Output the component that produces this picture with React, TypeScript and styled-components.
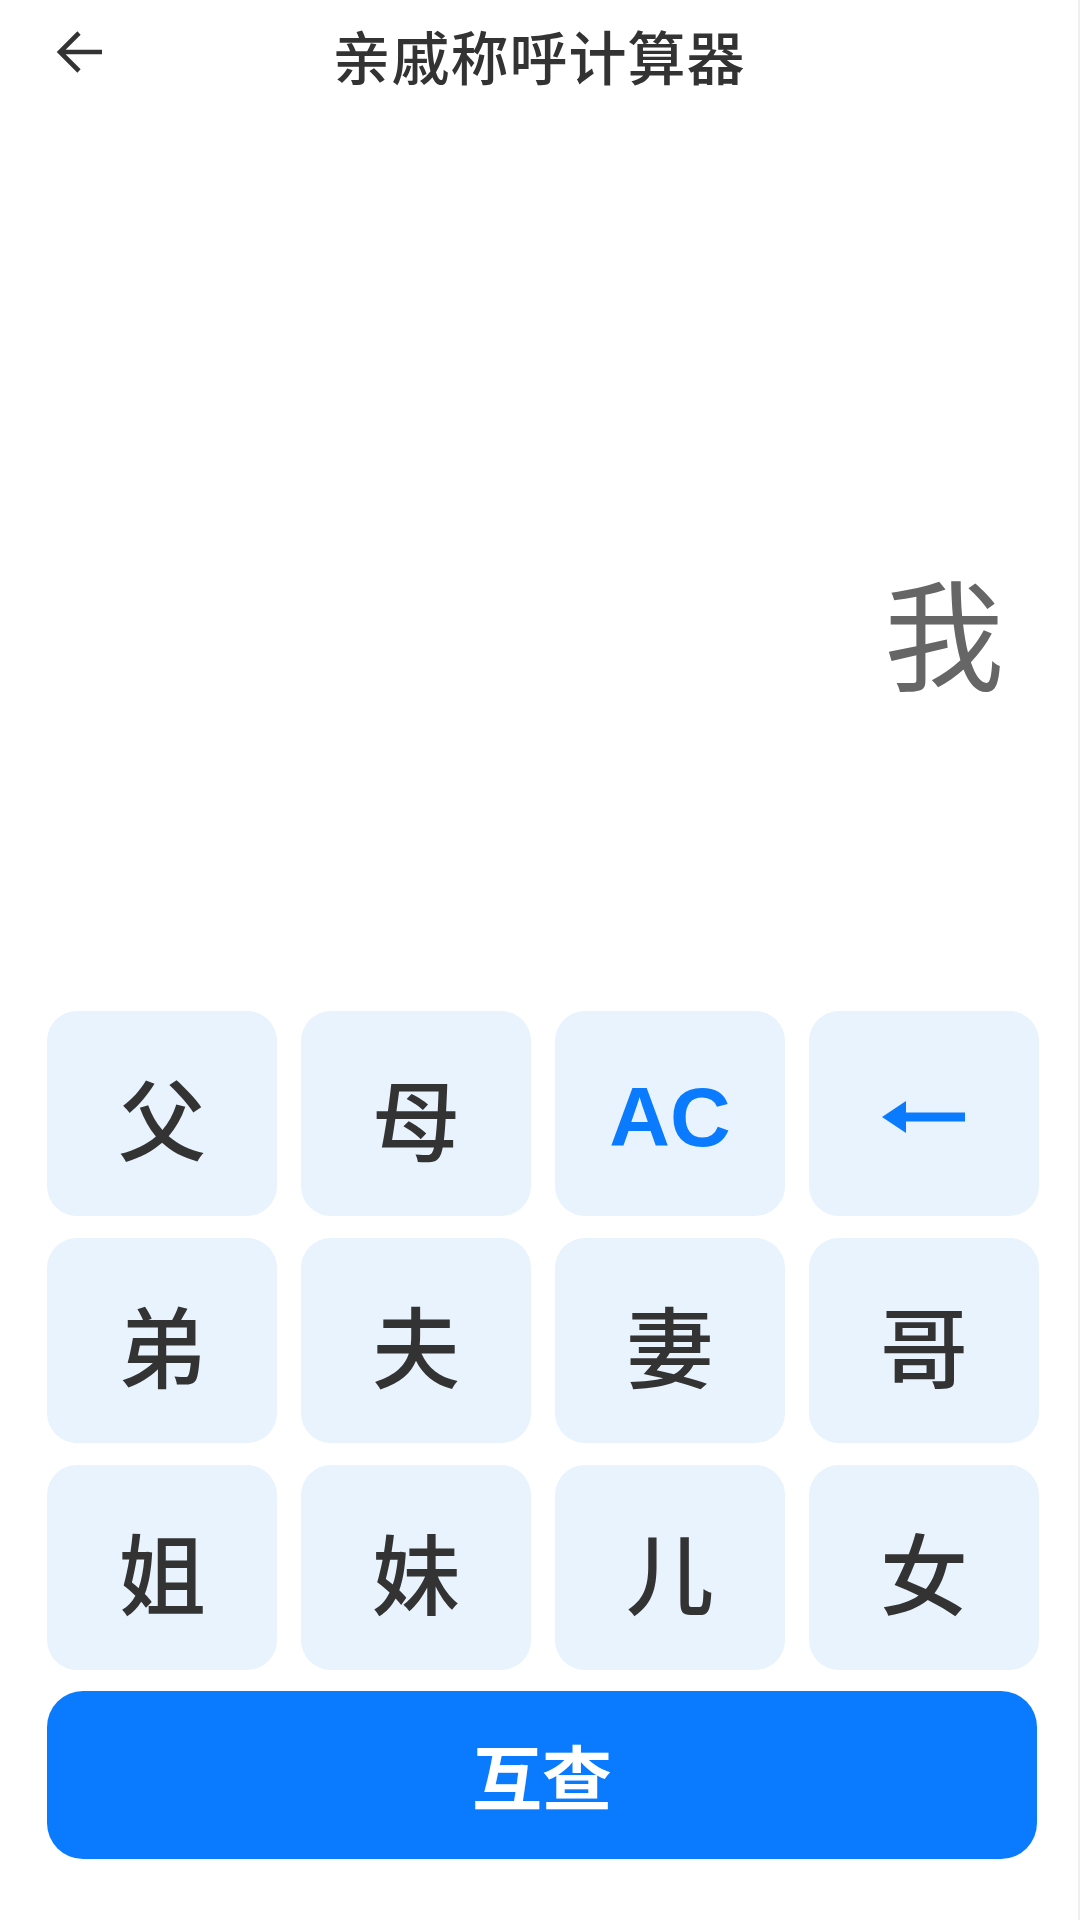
import React from 'react';
import styled, { createGlobalStyle } from 'styled-components';

const GlobalStyle = createGlobalStyle`
    html, body {
        margin: 0;
        padding: 0;
        background: #ffffff;
    }
    body {
        font-family: "Noto Sans CJK SC", "Noto Sans", sans-serif;
    }
`;

const KEYS: { label: string; kind?: 'clear' | 'back' }[] = [
    { label: '父' },
    { label: '母' },
    { label: 'AC', kind: 'clear' },
    { label: '←', kind: 'back' },
    { label: '弟' },
    { label: '夫' },
    { label: '妻' },
    { label: '哥' },
    { label: '姐' },
    { label: '妹' },
    { label: '儿' },
    { label: '女' },
];

export default (() => {
    return (
        <>
            <GlobalStyle />
            <Page>
                <Header>
                    <BackButton aria-label="返回">
                        <svg width="48" height="44" viewBox="0 0 48 44" fill="none">
                            <path d="M46 22H4M23 3L4 22l19 19" stroke="#333" strokeWidth="4.6" strokeLinejoin="miter" />
                        </svg>
                    </BackButton>
                    <Title>亲戚称呼计算器</Title>
                </Header>
                <Display>
                    <Result>我</Result>
                </Display>
                <Keypad>
                    {KEYS.map((key) => (
                        <Key key={key.label} $accent={!!key.kind}>
                            {key.kind === 'back' ? (
                                <svg width="84" height="32" viewBox="0 0 84 32">
                                    <path d="M0 16L24 0v11.5h59v9H24V32z" fill="#0A7BFF" />
                                </svg>
                            ) : key.kind === 'clear' ? (
                                <ClearLabel>{key.label}</ClearLabel>
                            ) : (
                                key.label
                            )}
                        </Key>
                    ))}
                </Keypad>
                <Footer>
                    <SubmitButton>互查</SubmitButton>
                </Footer>
            </Page>
        </>
    );
}) as React.FC;

const Page = styled.div`
    width: 1080px;
    min-height: 1920px;
    box-sizing: border-box;
    border-right: 2px solid #efefef;
    display: flex;
    flex-direction: column;
    background: #ffffff;
`;

const Header = styled.header`
    position: relative;
    height: 110px;
    display: flex;
    align-items: center;
    justify-content: center;
`;

const BackButton = styled.button`
    position: absolute;
    left: 56px;
    top: 30px;
    padding: 0;
    border: none;
    background: none;
    display: flex;
`;

const Title = styled.h1`
    margin: 0;
    font-size: 58px;
    font-weight: 500;
    color: #333333;
    letter-spacing: 1px;
    line-height: 1;
`;

const Display = styled.div`
    height: 901px;
    box-sizing: border-box;
    padding: 460px 74px 0 0;
    display: flex;
    justify-content: flex-end;
    align-items: flex-start;
`;

const Result = styled.div`
    font-size: 120px;
    line-height: 1;
    font-weight: 400;
    color: #666666;
`;

const Keypad = styled.div`
    display: grid;
    grid-template-columns: repeat(4, 230px);
    grid-auto-rows: 205px;
    column-gap: 24px;
    row-gap: 22px;
    padding: 0 0 0 47px;
`;

const Key = styled.button<{ $accent: boolean }>`
    border: none;
    border-radius: 30px;
    background: #e8f3fd;
    display: flex;
    align-items: center;
    justify-content: center;
    padding: ${(p) => (p.$accent ? '6px 0 0' : '4px 0 0')};
    font-family: "Noto Sans CJK SC", sans-serif;
    font-size: 88px;
    font-weight: 500;
    color: #333333;
    line-height: 1;
`;

const ClearLabel = styled.span`
    font-family: "Liberation Sans", Arial, sans-serif;
    font-weight: 700;
    font-size: 84px;
    color: #0a7bff;
`;

const Footer = styled.div`
    padding: 21px 41px 0 47px;
`;

const SubmitButton = styled.button`
    width: 100%;
    height: 168px;
    border: none;
    border-radius: 36px;
    background: #0a7bff;
    color: #ffffff;
    font-family: "Noto Sans CJK SC", sans-serif;
    font-size: 70px;
    font-weight: 700;
    line-height: 1;
    display: flex;
    align-items: center;
    justify-content: center;
`;
